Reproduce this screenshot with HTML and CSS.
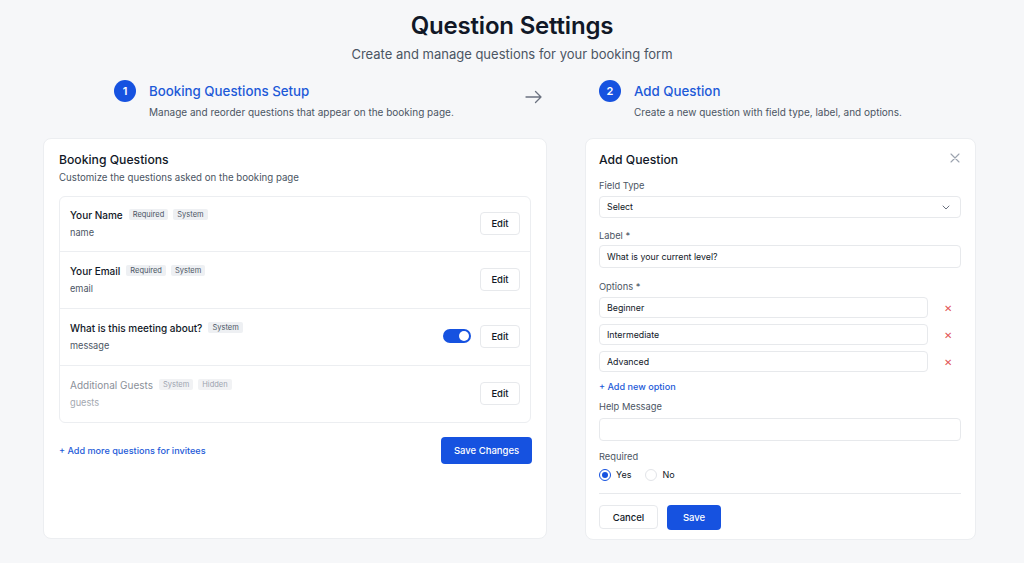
FILE: index.html
```html
<!DOCTYPE html>
<html lang="en">
<head>
<meta charset="utf-8">
<title>Question Settings</title>
<link rel="stylesheet" href="styles.css">
</head>
<body>
<div class="page">
  <header class="header">
    <h1 class="title">Question Settings</h1>
    <p class="subtitle">Create and manage questions for your booking form</p>
  </header>

  <div class="steps">
    <div class="step step-one">
      <div class="step-num">1</div>
      <div class="step-text">
        <div class="step-title">Booking Questions Setup</div>
        <div class="step-desc">Manage and reorder questions that appear on the booking page.</div>
      </div>
    </div>
    <div class="step-arrow">
      <svg width="18" height="14" viewBox="0 0 18 14" fill="none" stroke="#6b7280" stroke-width="1.3" stroke-linecap="round" stroke-linejoin="round"><path d="M1 7h15M10.5 1.5L16 7l-5.5 5.5"/></svg>
    </div>
    <div class="step">
      <div class="step-num">2</div>
      <div class="step-text">
        <div class="step-title">Add Question</div>
        <div class="step-desc">Create a new question with field type, label, and options.</div>
      </div>
    </div>
  </div>

  <div class="cards">
    <section class="card card-left">
      <h2 class="card-title">Booking Questions</h2>
      <p class="card-sub">Customize the questions asked on the booking page</p>
      <div class="qlist">
        <div class="qrow">
          <div class="qinfo">
            <div class="qhead"><span class="qname">Your Name</span><span class="badge">Required</span><span class="badge">System</span></div>
            <div class="qkey">name</div>
          </div>
          <div class="qactions"><button class="btn-edit">Edit</button></div>
        </div>
        <div class="qrow">
          <div class="qinfo">
            <div class="qhead"><span class="qname">Your Email</span><span class="badge">Required</span><span class="badge">System</span></div>
            <div class="qkey">email</div>
          </div>
          <div class="qactions"><button class="btn-edit">Edit</button></div>
        </div>
        <div class="qrow">
          <div class="qinfo">
            <div class="qhead"><span class="qname">What is this meeting about?</span><span class="badge">System</span></div>
            <div class="qkey">message</div>
          </div>
          <div class="qactions"><span class="toggle"><span class="knob"></span></span><button class="btn-edit">Edit</button></div>
        </div>
        <div class="qrow muted">
          <div class="qinfo">
            <div class="qhead"><span class="qname">Additional Guests</span><span class="badge">System</span><span class="badge">Hidden</span></div>
            <div class="qkey">guests</div>
          </div>
          <div class="qactions"><button class="btn-edit">Edit</button></div>
        </div>
      </div>
      <div class="card-foot">
        <a class="link">+ Add more questions for invitees</a>
        <button class="btn-primary btn-save-changes">Save Changes</button>
      </div>
    </section>

    <section class="card card-right">
      <div class="form-head">
        <h2 class="card-title">Add Question</h2>
        <svg class="close" width="10" height="10" viewBox="0 0 10 10" stroke="#9ca3af" stroke-width="1.1" stroke-linecap="round"><path d="M1 1l8 8M9 1L1 9"/></svg>
      </div>

      <div class="field f-type">
        <label class="flabel">Field Type</label>
        <div class="input select"><span>Select</span>
          <svg width="8" height="5" viewBox="0 0 8 5" fill="none" stroke="#6b7280" stroke-width="1" stroke-linecap="round" stroke-linejoin="round"><path d="M1 1l3 3 3-3"/></svg>
        </div>
      </div>

      <div class="field f-label">
        <label class="flabel">Label *</label>
        <div class="input tall">What is your current level?</div>
      </div>

      <div class="field f-options">
        <label class="flabel">Options *</label>
        <div class="opt"><div class="input">Beginner</div><span class="rm">✕</span></div>
        <div class="opt"><div class="input">Intermediate</div><span class="rm">✕</span></div>
        <div class="opt"><div class="input">Advanced</div><span class="rm">✕</span></div>
        <a class="link add-opt">+ Add new option</a>
      </div>

      <div class="field f-help">
        <label class="flabel">Help Message</label>
        <div class="input tall"></div>
      </div>

      <div class="field f-req">
        <label class="flabel">Required</label>
        <div class="radios">
          <span class="radio on"><span class="dot"></span></span><span class="rlabel">Yes</span>
          <span class="radio"></span><span class="rlabel">No</span>
        </div>
      </div>

      <div class="form-foot">
        <button class="btn-ghost">Cancel</button>
        <button class="btn-primary btn-save">Save</button>
      </div>
    </section>
  </div>
</div>
</body>
</html>
```

FILE: styles.css
```css
* { box-sizing: border-box; }
html, body { margin: 0; padding: 0; }
body {
  background: #f6f7f9;
  font-family: Inter, "Noto Sans", "Liberation Sans", sans-serif;
  color: #111827;
  width: 1024px;
  height: 563px;
  overflow: hidden;
}
.page { padding-top: 10px; }

.header { text-align: center; }
.title {
  margin: 0;
  font-size: 24px;
  line-height: 32px;
  font-weight: 600;
  color: #111827;
  letter-spacing: -0.2px;
}
.subtitle {
  margin: 3px 0 0;
  font-size: 13px;
  line-height: 18px;
  color: #4b5563;
}

.steps {
  display: flex;
  align-items: flex-start;
  margin-top: 17px;
  padding-left: 114px;
  height: 58px;
}
.step { display: flex; align-items: flex-start; }
.step-one { width: 411px; }
.step-num {
  width: 22px; height: 22px;
  border-radius: 50%;
  background: #1652e0;
  color: #fff;
  font-size: 11px;
  font-weight: 600;
  display: flex; align-items: center; justify-content: center;
  flex: none;
}
.step-text { margin-left: 13px; }
.step-title {
  font-size: 13.3px;
  line-height: 22px;
  font-weight: 500;
  color: #1d5ad8;
}
.step-desc {
  margin-top: 0;
  font-size: 10px;
  line-height: 20px;
  color: #4b5563;
}
.step-arrow { width: 18px; margin-top: 10px; margin-right: 56px; }
.step-arrow svg { display: block; }

.cards {
  display: flex;
  gap: 38px;
  padding-left: 43px;
  align-items: flex-start;
}
.card {
  background: #fff;
  border: 1px solid #eceef1;
  border-radius: 8px;
}
.card-left {
  width: 504px;
  height: 401px;
  padding: 12px 15px 0 15px;
}
.card-right {
  width: 391px;
  height: 402px;
  padding: 12px 14px 0 13px;
}
.card-title {
  margin: 0;
  font-size: 12.2px;
  line-height: 18px;
  font-weight: 500;
  color: #111827;
}
.card-sub {
  margin: 2px 0 0;
  font-size: 9.7px;
  line-height: 14px;
  color: #4b5563;
}

.qlist {
  margin-top: 11px;
  border: 1px solid #eceef1;
  border-radius: 6px;
}
.qrow {
  height: 57px;
  display: flex;
  align-items: center;
  justify-content: space-between;
  padding: 0 10px 2px 10px;
  border-top: 1px solid #eceef1;
}
.qrow:first-child { border-top: none; height: 54px; }
.qhead { display: flex; align-items: center; }
.qname {
  font-size: 10px;
  line-height: 16px;
  font-weight: 500;
  color: #111827;
  margin-right: 6px;
}
.badge {
  font-size: 7.5px;
  line-height: 11px;
  padding: 0 4px;
  background: #eef0f3;
  color: #4b5563;
  border-radius: 2px;
  margin-right: 5px;
}
.qkey {
  margin-top: 3px;
  font-size: 9.2px;
  line-height: 14px;
  color: #4b5563;
}
.qrow.muted .qname { color: #8b9099; font-weight: 400; }
.qrow.muted .qkey { color: #a3a8b0; }
.qrow.muted .badge { color: #9ca3af; background: #f1f2f4; }
.qactions { display: flex; align-items: center; gap: 9px; }
.btn-edit {
  width: 40px; height: 23px;
  background: #fff;
  border: 1px solid #e7e9ec;
  border-radius: 4px;
  font-family: inherit;
  font-size: 9.5px;
  font-weight: 500;
  color: #111827;
  padding: 0;
}
.toggle {
  width: 28px; height: 14px;
  border-radius: 7px;
  background: #1652e0;
  position: relative;
  display: block;
}
.knob {
  position: absolute;
  right: 2px; top: 2px;
  width: 10px; height: 10px;
  border-radius: 50%;
  background: #fff;
}

.card-foot {
  display: flex;
  justify-content: space-between;
  align-items: center;
  margin-top: 14px;
}
.link {
  font-size: 9.1px;
  line-height: 14px;
  font-weight: 500;
  color: #1d5ad8;
}
.btn-primary {
  background: #1652e0;
  color: #fff;
  border: none;
  border-radius: 4px;
  font-family: inherit;
  font-weight: 500;
  padding: 0;
}
.btn-save-changes { width: 91px; height: 27px; font-size: 9.5px; margin-right: -1px; }

.form-head {
  display: flex;
  justify-content: space-between;
  align-items: center;
  padding-right: 1px;
}
.close { display: block; margin-top: -4px; }

.field { margin-top: 0; }
.flabel {
  display: block;
  font-size: 9.3px;
  line-height: 14px;
  color: #4b5563;
}
.f-type { margin-top: 10px; }
.f-type .flabel { margin-bottom: 3px; }
.input {
  height: 22px;
  border: 1px solid #e7e9ec;
  border-radius: 4px;
  padding: 0 7px;
  font-size: 8.8px;
  line-height: 20px;
  color: #111827;
  background: #fff;
}
.input.tall { height: 23px; line-height: 21px; }
.select {
  display: flex;
  justify-content: space-between;
  align-items: center;
  padding-right: 10px;
}
.select svg { display: block; }
.f-label { margin-top: 11px; }
.f-label .flabel { margin-bottom: 2px; }
.f-options { margin-top: 12px; }
.f-options .flabel { margin-bottom: 3px; }
.opt {
  display: flex;
  align-items: center;
  margin-bottom: 6px;
}
.opt .input { width: 329px; height: 21px; line-height: 19px; }
.rm {
  margin-left: 16px;
  color: #e25555;
  font-size: 10px;
  line-height: 14px;
}
.add-opt { display: block; margin-top: 8px; }
.f-help { margin-top: 6px; }
.f-help .flabel { margin-bottom: 4px; }
.f-req { margin-top: 9px; }
.radios {
  display: flex;
  align-items: center;
  margin-top: 4px;
  height: 14px;
}
.radio {
  width: 12px; height: 12px;
  border-radius: 50%;
  border: 1px solid #e2e4e8;
  background: #fff;
  display: flex; align-items: center; justify-content: center;
  margin-right: 5px;
}
.radio.on { border-color: #1652e0; }
.dot { width: 6px; height: 6px; border-radius: 50%; background: #1652e0; }
.rlabel {
  font-size: 9px;
  line-height: 14px;
  color: #111827;
  margin-right: 14px;
}

.form-foot {
  margin-top: 11px;
  padding-top: 11px;
  border-top: 1px solid #e7e9ec;
  display: flex;
  gap: 9px;
}
.btn-ghost {
  width: 59px; height: 24px;
  background: #fff;
  border: 1px solid #e7e9ec;
  border-radius: 4px;
  font-family: inherit;
  font-size: 9.5px;
  font-weight: 500;
  color: #111827;
  padding: 0;
}
.btn-save { width: 54px; height: 25px; font-size: 9.5px; }
```
